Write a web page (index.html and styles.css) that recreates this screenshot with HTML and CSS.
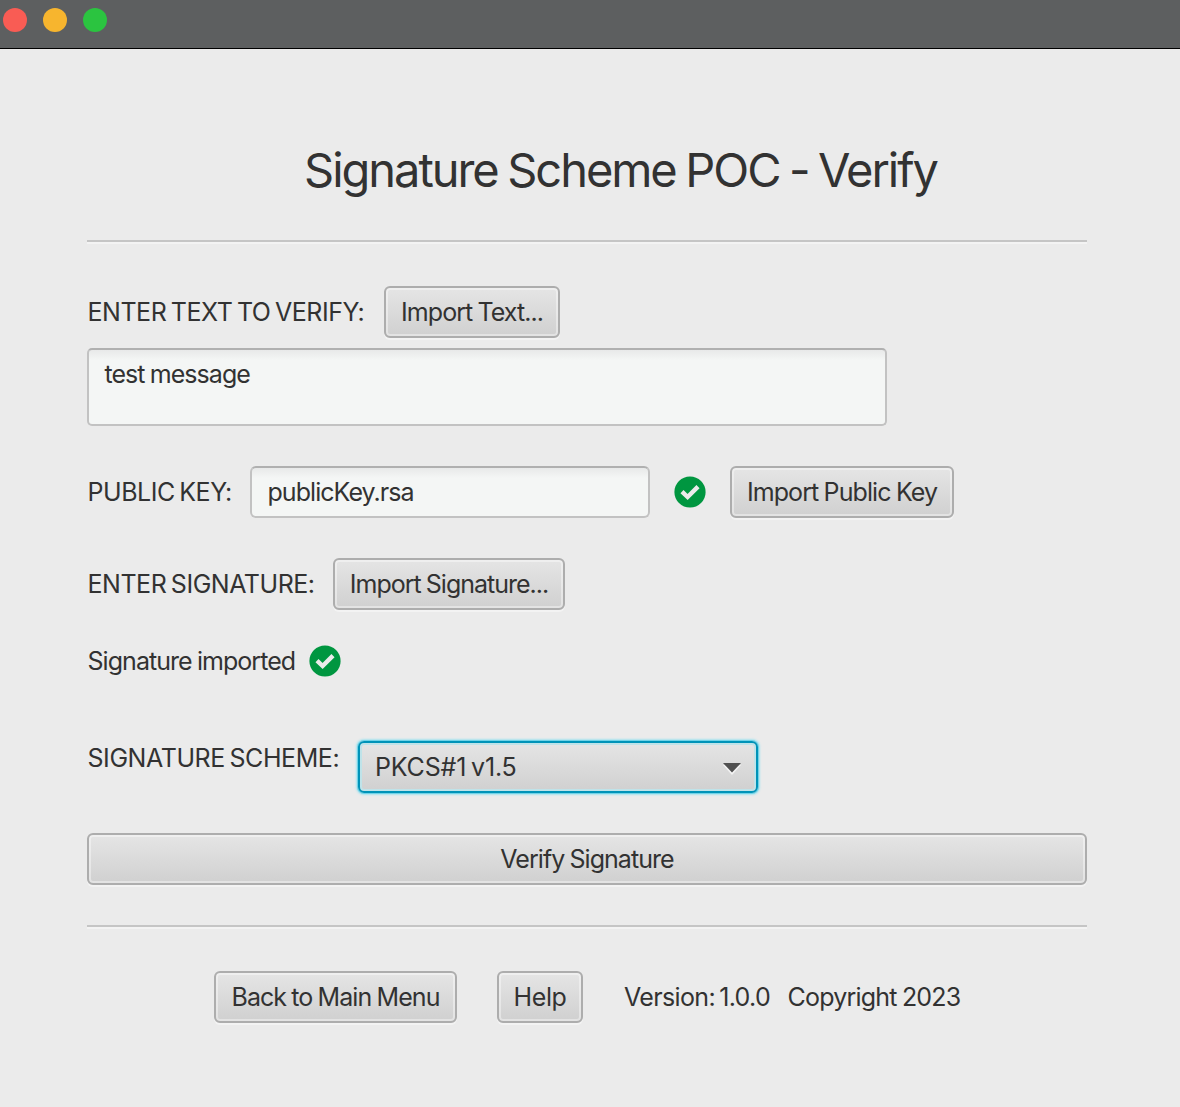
FILE: index.html
```
<!DOCTYPE html>
<html lang="en">
<head>
<meta charset="utf-8">
<title>Signature Scheme POC - Verify</title>
<link rel="stylesheet" href="styles.css">
</head>
<body>
<header class="titlebar"><i class="dot red"></i><i class="dot amber"></i><i class="dot green"></i></header>
<main class="content">
  <h1 class="title">Signature Scheme POC - Verify</h1>
  <div class="rule"></div>
  <div class="row text-row"><label class="w-text">ENTER TEXT TO VERIFY:</label><button class="btn b-text">Import Text...</button></div>
  <div class="field message">test message</div>
  <div class="row key-row"><label class="w-key">PUBLIC KEY:</label><div class="field key">publicKey.rsa</div>
    <svg class="check key-check" viewBox="0 0 32 32"><circle cx="16" cy="16" r="15.6" fill="#009640"/><path d="M8 15.7 13.6 21 24 10.6" fill="none" stroke="#ebebeb" stroke-width="4.4"/></svg>
    <button class="btn b-key">Import Public Key</button></div>
  <div class="row sig-row"><label class="w-sig">ENTER SIGNATURE:</label><button class="btn b-sig">Import Signature...</button></div>
  <div class="row status-row"><span class="w-status">Signature imported</span>
    <svg class="check" viewBox="0 0 32 32"><circle cx="16" cy="16" r="15.6" fill="#009640"/><path d="M8 15.7 13.6 21 24 10.6" fill="none" stroke="#ebebeb" stroke-width="4.4"/></svg></div>
  <div class="row scheme-row"><label class="w-scheme">SIGNATURE SCHEME:</label>
    <div class="combo">PKCS#1 v1.5<svg class="arrow" viewBox="0 0 18 12"><path d="M0 2H18L9 12z" fill="#f4f4f4"/><path d="M0 0H18L9 9.5z" fill="#505050"/></svg></div></div>
  <button class="btn verify">Verify Signature</button>
  <div class="rule"></div>
  <footer class="row footer"><button class="btn b-back">Back to Main Menu</button><button class="btn b-help">Help</button><span class="w-version">Version: 1.0.0</span><span class="copyright">Copyright 2023</span></footer>
</main>
</body>
</html>
```
FILE: styles.css
```
* { box-sizing: border-box; }
body { margin: 0; min-height: 1107px; background: #ebebeb; color: #323232; font: 25px/30px Inter, "Liberation Sans", sans-serif; letter-spacing: -.95px; word-spacing: -.9px; white-space: nowrap; }
.titlebar { display: flex; gap: 16px; height: 49px; padding: 8px 0 0 3px; background: #5d5f60; border-bottom: 1px solid #000; }
.dot { width: 24px; height: 24px; border-radius: 50%; }
.red { background: #f95c54; }
.amber { background: #f7b52e; }
.green { background: #2bc440; }
.content { width: 1000px; margin-left: 87px; padding-top: 91px; }
.title { margin: 0 0 40px; padding-left: 67px; height: 60px; font-size: 47px; line-height: 60px; font-weight: 400; text-align: center; letter-spacing: -2.05px; word-spacing: -1.6px; }
.rule { height: 4px; border-top: 2px solid #c5c5c5; border-bottom: 2px solid #f3f3f3; }
.row { display: flex; align-items: center; }
.row label { padding-left: .5px; letter-spacing: -.47px; word-spacing: -2px; }
.btn { height: 52px; padding: 0; border: 2px solid #adadad; border-radius: 6px; background: linear-gradient(#e5e5e5, #d0d0d0); box-shadow: inset 0 0 0 2px rgba(255,255,255,.4), 0 2px 0 #f3f3f3; color: inherit; font: inherit; letter-spacing: inherit; word-spacing: inherit; text-align: center; }
.field { border: 2px solid #c2c2c2; border-top-color: #b0b0b0; border-radius: 6px; background: linear-gradient(#e8e9e9, #f4f6f5 10px); padding-left: 15.5px; }
.text-row { margin-top: 42px; }
.w-text { width: 297px; }
.b-text { width: 176px; }
.message { width: 800px; height: 78px; margin-top: 10px; padding-top: 9px; border-radius: 5px; }
.key-row { margin-top: 40px; }
.w-key { width: 163px; }
.key { width: 400px; height: 52px; padding-top: 9px; }
.check { width: 32px; height: 32px; }
.key-check { margin: 0 24px; }
.b-key { width: 224px; letter-spacing: -.9px; }
.sig-row { margin-top: 40px; }
.w-sig { width: 246px; }
.b-sig { width: 232px; letter-spacing: -1px; }
.status-row { margin-top: 35px; }
.w-status { width: 222px; padding-left: .5px; }
.scheme-row { margin-top: 64px; align-items: flex-start; }
.row .w-scheme { width: 271px; padding-top: 2px; letter-spacing: -.43px; }
.combo { display: flex; align-items: center; justify-content: space-between; width: 400px; height: 52px; padding: 0 15px; border: 2px solid #0093b8; border-radius: 6px; background: linear-gradient(#e5e5e5, #d0d0d0); box-shadow: inset 0 0 0 2px #bfe3e9, 0 0 0 1px #6fd3e8, 0 0 2px 2px #a9e3ee; letter-spacing: -.15px; word-spacing: -2.2px; }
.arrow { width: 18px; height: 12px; margin-top: 4px; }
.verify { display: block; width: 1000px; margin: 40px 0; }
.footer { margin: 42px 0 0 127px; letter-spacing: -.8px; }
.b-back { width: 243px; margin-right: 40px; letter-spacing: -.93px; }
.b-help { width: 86px; margin-right: 41px; letter-spacing: -.4px; }
.w-version { width: 163.5px; letter-spacing: -.65px; word-spacing: -2.2px; }
```
